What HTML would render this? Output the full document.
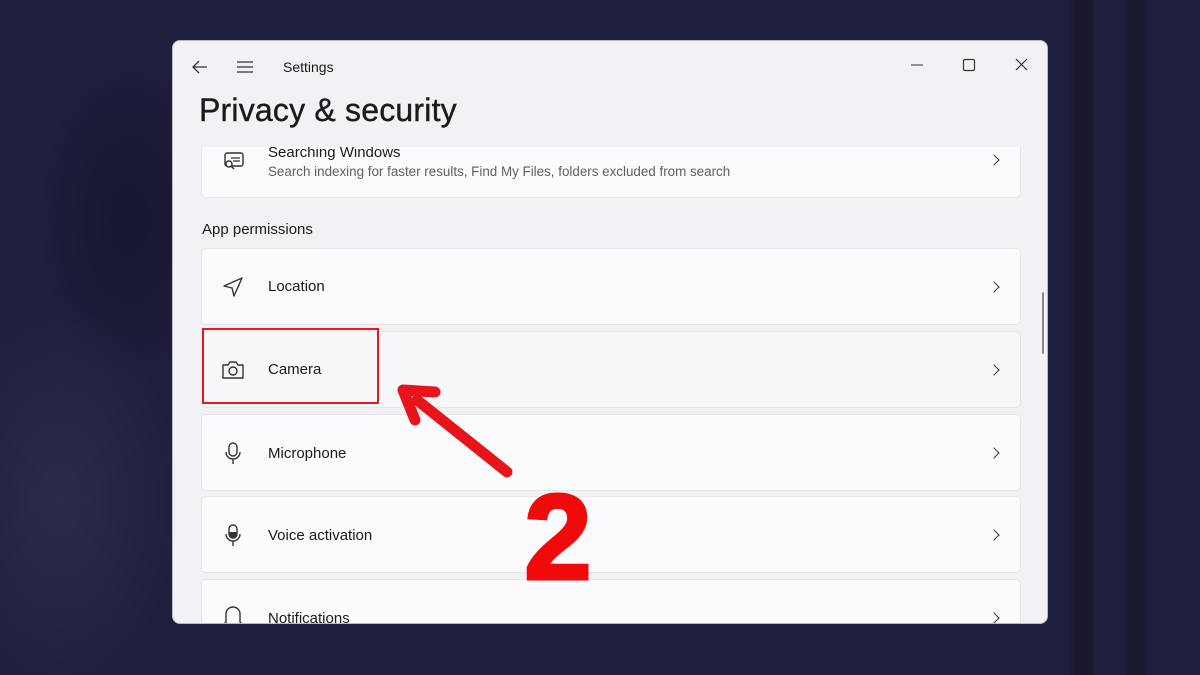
<!DOCTYPE html>
<html><head><meta charset="utf-8"><style>
*{margin:0;padding:0;box-sizing:border-box}
body{width:1200px;height:675px;overflow:hidden;background:#1e1e3d;font-family:"Liberation Sans",sans-serif;position:relative}
.bg1{position:absolute;left:0;top:0;width:1200px;height:675px;background:
linear-gradient(90deg,transparent 1070px,#19182f 1075px,#19182f 1090px,transparent 1095px,transparent 1125px,#1a1a33 1128px,#1a1a33 1142px,transparent 1146px),
radial-gradient(ellipse 120px 200px at 60px 500px,#2b2b4a,transparent),
radial-gradient(ellipse 90px 160px at 130px 220px,#17172f,transparent);}
.win{position:absolute;left:172px;top:40px;width:876px;height:584px;background:#f2f2f6;border-radius:8px;overflow:hidden;border:1px solid #b8b8c4}
.t{position:absolute;color:#1b1b1b}
.card{position:absolute;left:28px;width:820px;background:#fbfbfd;border:1px solid #e6e6ea;border-radius:5px}
.lbl{position:absolute;left:66px;font-size:15px;color:#1b1b1b}
.chev{position:absolute;right:22px;width:8px;height:8px;border-top:1.3px solid #333;border-right:1.3px solid #333;transform:rotate(45deg)}
svg{position:absolute}
</style></head><body>
<div class="bg1"></div>
<div class="win">
 <svg style="left:18px;top:18px" width="18" height="16" viewBox="0 0 18 16"><path d="M16 8H2M8 2L2 8l6 6" fill="none" stroke="#333" stroke-width="1.3"/></svg>
 <svg style="left:63px;top:19px" width="18" height="14" viewBox="0 0 18 14"><path d="M1 2h16M1 7h16M1 12h16" stroke="#333" stroke-width="1.3"/></svg>
 <div class="t" style="left:110px;top:18px;font-size:14px">Settings</div>
 <svg style="left:738px;top:14px" width="140" height="20" viewBox="0 0 140 20"><path d="M0 10h12" stroke="#333" stroke-width="1"/><rect x="52.5" y="4.5" width="11" height="11" rx="1.5" fill="none" stroke="#333" stroke-width="1.2"/><path d="M105 4l11 11M116 4l-11 11" stroke="#333" stroke-width="1.2"/></svg>
 <div class="t" style="left:26px;top:51px;font-size:32px;letter-spacing:0.2px;-webkit-text-stroke:0.4px #1b1b1b">Privacy &amp; security</div>
 <div style="position:absolute;left:0;top:106px;width:876px;height:480px;overflow:hidden">
  <div class="card" style="top:-10px;height:61px">
   <svg style="left:20px;top:12px" width="24" height="24" viewBox="0 0 24 24"><rect x="3" y="3" width="18" height="13" rx="2" fill="none" stroke="#333" stroke-width="1.4"/><path d="M9 8h9M11 11h7" stroke="#333" stroke-width="1.3"/><circle cx="7" cy="14" r="3" fill="#fbfbfd" stroke="#333" stroke-width="1.4"/><path d="M9 16l3 3" stroke="#333" stroke-width="1.4"/></svg>
   <div class="lbl" style="top:6px">Searching Windows</div>
   <div class="lbl" style="top:26px;font-size:13.4px;color:#5f5f5f">Search indexing for faster results, Find My Files, folders excluded from search</div>
   <div class="chev" style="top:18px"></div>
  </div>
  <div class="t" style="left:29px;top:74px;font-size:15px">App permissions</div>
  <div class="card" style="top:101px;height:77px"><svg style="left:20px;top:27px" width="22" height="22" viewBox="0 0 22 22"><path d="M20 2L2 10l8 2 2 8z" fill="none" stroke="#333" stroke-width="1.4" stroke-linejoin="round"/></svg><div class="lbl" style="top:29px">Location</div><div class="chev" style="top:34px"></div></div>
  <div class="card" style="top:184px;height:77px;background:#f7f7f9"><svg style="left:19px;top:27px" width="24" height="22" viewBox="0 0 24 22"><path d="M2 6h5l2-3h6l2 3h5v13H2z" fill="none" stroke="#333" stroke-width="1.4" stroke-linejoin="round"/><circle cx="12" cy="12" r="4" fill="none" stroke="#333" stroke-width="1.4"/></svg><div class="lbl" style="top:29px">Camera</div><div class="chev" style="top:34px"></div></div>
  <div class="card" style="top:267px;height:77px"><svg style="left:21px;top:26px" width="20" height="24" viewBox="0 0 20 24"><rect x="6" y="2" width="8" height="13" rx="4" fill="none" stroke="#333" stroke-width="1.4"/><path d="M3 11a7 7 0 0014 0M10 18v5" fill="none" stroke="#333" stroke-width="1.4"/></svg><div class="lbl" style="top:30px">Microphone</div><div class="chev" style="top:34px"></div></div>
  <div class="card" style="top:349px;height:77px"><svg style="left:21px;top:26px" width="20" height="24" viewBox="0 0 20 24"><rect x="6" y="2" width="8" height="13" rx="4" fill="none" stroke="#333" stroke-width="1.4"/><path d="M6 9h8v2a4 4 0 01-8 0z" fill="#333"/><path d="M3 11a7 7 0 0014 0M10 18v5" fill="none" stroke="#333" stroke-width="1.4"/></svg><div class="lbl" style="top:30px">Voice activation</div><div class="chev" style="top:34px"></div></div>
  <div class="card" style="top:432px;height:77px"><svg style="left:20px;top:24px" width="22" height="24" viewBox="0 0 22 24"><path d="M4 18V10a7 7 0 0114 0v8l2 2H2z" fill="none" stroke="#333" stroke-width="1.4"/></svg><div class="lbl" style="top:30px">Notifications</div><div class="chev" style="top:34px"></div></div>
 </div>
 <div style="position:absolute;left:869px;top:251px;width:2px;height:62px;background:#8a8a8a;border-radius:1px"></div>
</div>
<div style="position:absolute;left:202px;top:328px;width:177px;height:76px;border:2px solid #e01b24"></div>
<svg style="position:absolute;left:395px;top:380px" width="125" height="100" viewBox="0 0 125 100"><path d="M112 92L22 20" stroke="#e8141c" stroke-width="11" stroke-linecap="round"/><path d="M8 10l32 2M8 10l12 30" stroke="#e8141c" stroke-width="11" stroke-linecap="round"/></svg>
<div style="position:absolute;left:524px;top:476px;font-size:122px;font-weight:bold;color:#f00a0a;line-height:1;-webkit-text-stroke:3px #f00a0a;font-family:'Liberation Sans',sans-serif">2</div>
</body></html>
